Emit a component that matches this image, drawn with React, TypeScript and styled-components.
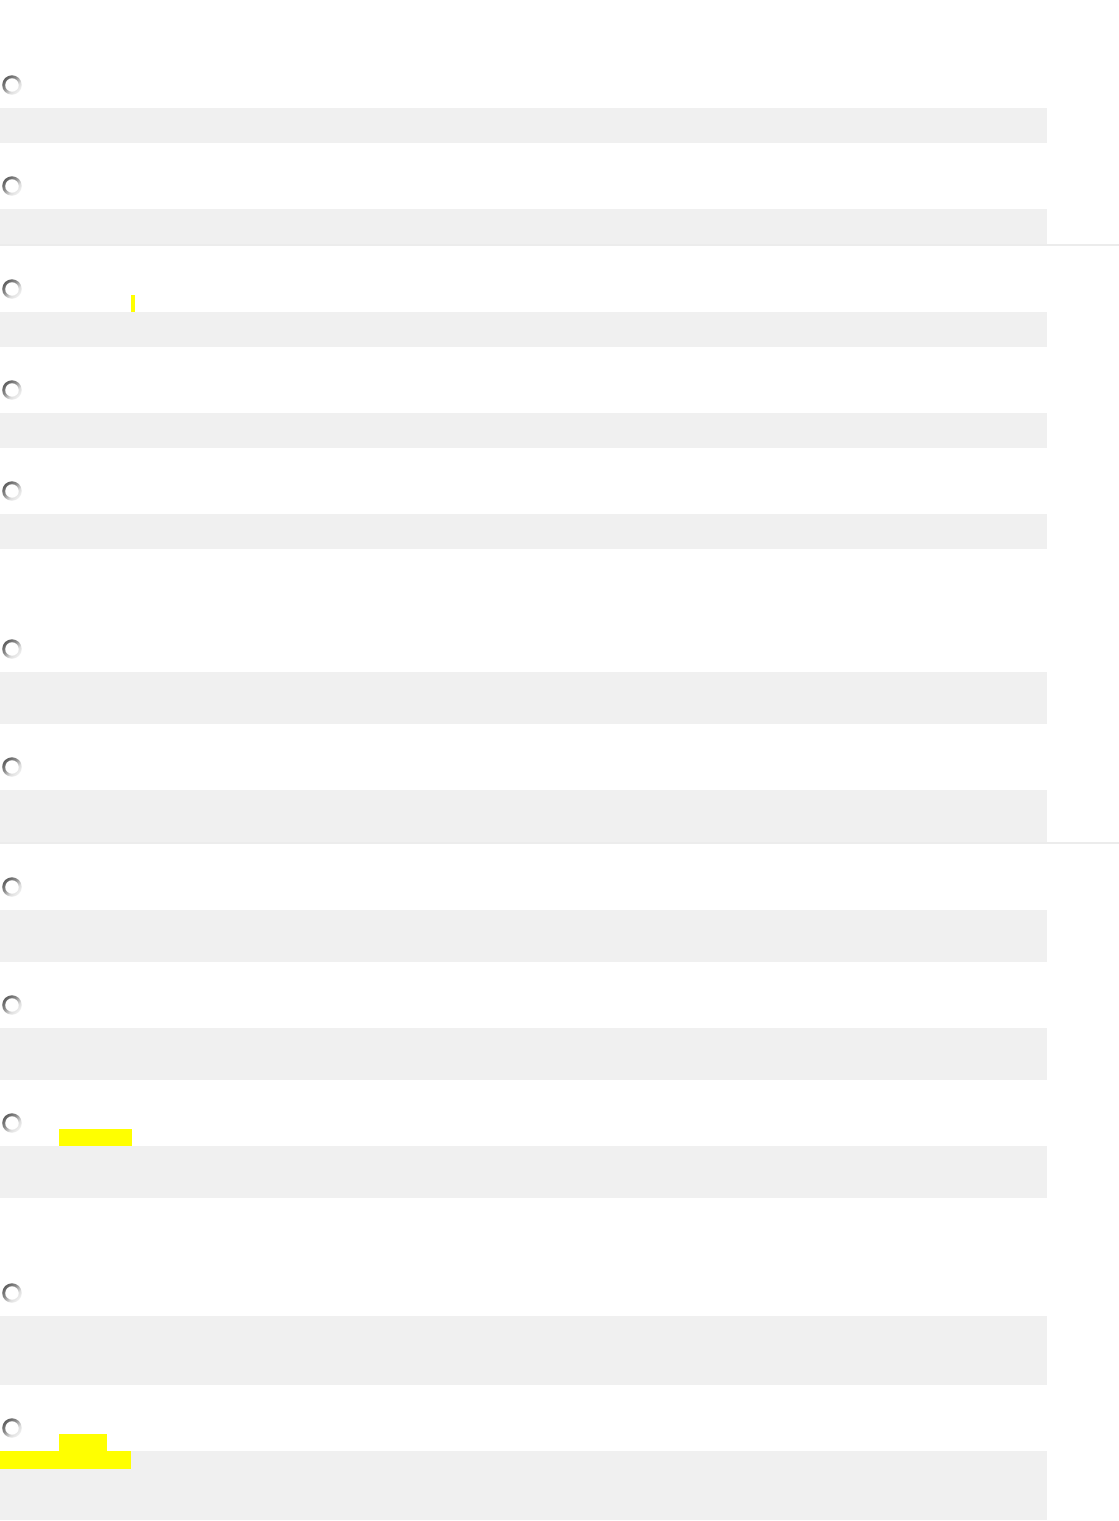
import React from "react";
import styled, { createGlobalStyle } from "styled-components";

const Global = createGlobalStyle`
  html, body { margin: 0; padding: 0; background: #ffffff; }
  body { font-family: "Liberation Sans", Arial, sans-serif; }
`;

const Page = styled.div`
  width: 1119px;
  padding-top: 75px;
  display: flex;
  flex-direction: column;
`;

const Group = styled.section<{ $top: number }>`
  display: flex;
  flex-direction: column;
  margin-top: ${(p) => p.$top}px;
`;

const Item = styled.div<{ $divider?: boolean; $last?: boolean }>`
  position: relative;
  display: flex;
  flex-direction: column;
  padding-bottom: ${(p) => (p.$last ? 0 : 33)}px;
  ${(p) =>
    p.$divider
      ? `
    padding-bottom: 0;
    margin-bottom: 33px;
    border-bottom: 2px solid #ececec;
  `
      : ""}
`;

const Head = styled.div`
  height: 20px;
  margin-bottom: 13px;
  display: flex;
  align-items: center;
`;

const Bar = styled.div<{ $h: number }>`
  width: 1047px;
  height: ${(p) => p.$h}px;
  background: #f0f0f0;
`;

const Mark = styled.span<{ $x: number; $y: number; $w: number; $h: number }>`
  position: absolute;
  left: ${(p) => p.$x}px;
  top: ${(p) => p.$y}px;
  width: ${(p) => p.$w}px;
  height: ${(p) => p.$h}px;
  background: #ffff00;
`;

const Radio = () => (
  <svg width="22" height="22" viewBox="0 0 22 22" style={{ marginLeft: 1 }}>
    <defs>
      <linearGradient id="rg" x1="0" y1="0.1" x2="0.9" y2="1">
        <stop offset="0" stopColor="#555555" />
        <stop offset="0.4" stopColor="#8c8c8c" />
        <stop offset="0.72" stopColor="#dddddd" />
        <stop offset="1" stopColor="#f4f4f4" />
      </linearGradient>
    </defs>
    <circle cx="11" cy="11" r="8.3" fill="#fff" stroke="url(#rg)" strokeWidth="3" />
  </svg>
);

type Hl = { x: number; y: number; w: number; h: number };
type Q = { bar: number; divider?: boolean; marks?: Hl[] };

const groups: { top: number; items: Q[] }[] = [
  {
    top: 0,
    items: [
      { bar: 35 },
      { bar: 35, divider: true },
      { bar: 35, marks: [{ x: 131, y: 16, w: 4, h: 17 }] },
      { bar: 35 },
      { bar: 35 },
    ],
  },
  {
    top: 57,
    items: [
      { bar: 52 },
      { bar: 52, divider: true },
      { bar: 52 },
      { bar: 52 },
      { bar: 52, marks: [{ x: 59, y: 16, w: 73, h: 17 }] },
    ],
  },
  {
    top: 52,
    items: [
      { bar: 69 },
      {
        bar: 69,
        marks: [
          { x: 59, y: 16, w: 48, h: 17 },
          { x: 0, y: 33, w: 131, h: 18 },
        ],
      },
    ],
  },
];

export default function App() {
  return (
    <>
      <Global />
      <Page>
        {groups.map((g, gi) => (
          <Group key={gi} $top={g.top}>
            {g.items.map((q, qi) => (
              <Item
                key={qi}
                $divider={q.divider}
                $last={gi === groups.length - 1 && qi === g.items.length - 1}
              >
                <Head>
                  <Radio />
                </Head>
                <Bar $h={q.bar} />
                {q.marks?.map((m, mi) => (
                  <Mark key={mi} $x={m.x} $y={m.y} $w={m.w} $h={m.h} />
                ))}
              </Item>
            ))}
          </Group>
        ))}
      </Page>
    </>
  );
}
